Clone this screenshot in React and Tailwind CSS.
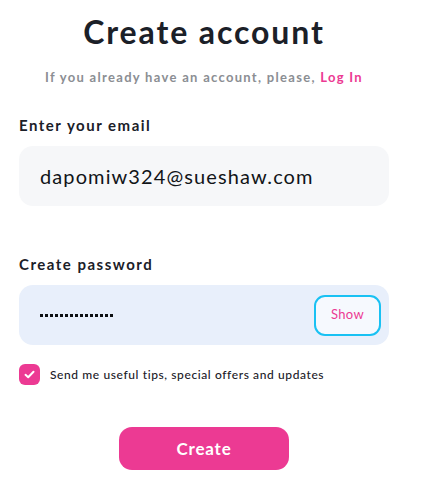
import { useState } from "react";

export default function App() {
  const [checked, setChecked] = useState(true);
  const font = { fontFamily: "Lato, 'Noto Sans', sans-serif" };

  return (
    <div className="min-h-[483px] bg-white" style={font}>
      <div className="w-[370px] ml-[19px] flex flex-col">
        <h1 className="mt-[13px] text-center text-[32px] leading-[38px] font-bold tracking-[1.9px] text-[#1b2028]">
          Create account
        </h1>
        <p className="mt-[18px] text-center text-[13px] leading-[16px] font-bold tracking-[1.3px] text-[#8b8e93]">
          If you already have an account, please,{" "}
          <a href="#" className="text-[#ec3a93]">
            Log In
          </a>
        </p>

        <label className="mt-[31px] text-[15px] leading-[18px] font-bold tracking-[1.5px] text-[#1b2028]">
          Enter your email
        </label>
        <div className="mt-[12px] h-[60px] rounded-[14px] bg-[#f6f7f9] flex items-center px-[21px]">
          <span className="text-[20px] tracking-[1.1px] text-[#111418]">dapomiw324@sueshaw.com</span>
        </div>

        <label className="mt-[49px] text-[15px] leading-[18px] font-bold tracking-[1.5px] text-[#1b2028]">
          Create password
        </label>
        <div className="mt-[12px] h-[60px] rounded-[14px] bg-[#e8effb] flex items-center pl-[21px] pr-[8px]">
          <div className="flex gap-[2px] mt-[1px]">
            {Array.from({ length: 15 }).map((_, i) => (
              <span key={i} className="w-[3px] h-[3px] bg-[#0d0f12]" />
            ))}
          </div>
          <button className="ml-auto w-[67px] h-[41px] rounded-[11px] border-2 border-[#19c1f3] bg-[#f6f9fe] text-[13px] tracking-[0.3px] text-[#ec3a93]">
            Show
          </button>
        </div>

        <label className="mt-[19px] flex items-center gap-[10px] cursor-pointer">
          <span
            onClick={() => setChecked(!checked)}
            className="w-[21px] h-[21px] rounded-[6px] bg-[#ec3a93] flex items-center justify-center"
          >
            {checked && (
              <svg width="11" height="9" viewBox="0 0 11 9" fill="none">
                <path d="M1.5 4.8 L4.2 7.2 L9.5 1.8" stroke="white" strokeWidth="2" strokeLinecap="round" strokeLinejoin="round" />
              </svg>
            )}
          </span>
          <span className="text-[12px] leading-[14px] tracking-[0.6px] font-medium text-[#1b2028]">
            Send me useful tips, special offers and updates
          </span>
        </label>

        <button className="mt-[42px] self-center w-[170px] h-[43px] rounded-[13px] bg-[#ec3a93] text-white text-[17px] font-bold tracking-[0.8px]">
          Create
        </button>
      </div>
    </div>
  );
}
